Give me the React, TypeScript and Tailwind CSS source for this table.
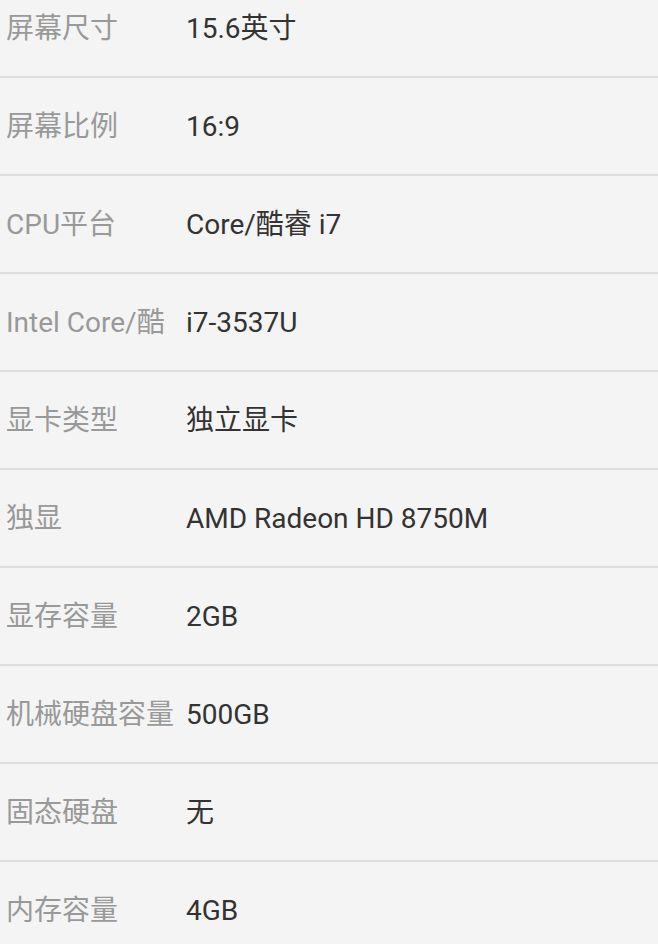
import React from "react";

const rows: [string, string][] = [
  ["屏幕尺寸", "15.6英寸"],
  ["屏幕比例", "16:9"],
  ["CPU平台", "Core/酷睿 i7"],
  ["Intel Core/酷", "i7-3537U"],
  ["显卡类型", "独立显卡"],
  ["独显", "AMD Radeon HD 8750M"],
  ["显存容量", "2GB"],
  ["机械硬盘容量", "500GB"],
  ["固态硬盘", "无"],
  ["内存容量", "4GB"],
];

export default function App() {
  return (
    <div
      className="w-[658px] h-[944px] overflow-hidden bg-[#f4f4f4]"
      style={{ fontFamily: 'Roboto, "Noto Sans CJK SC", sans-serif' }}
    >
      {rows.map(([k, v], i) => (
        <div
          key={i}
          className={`flex items-center text-[28px] leading-[40px] ${
            i === 0 ? "pt-[9px] pb-[27px]" : "pt-[29px] pb-[27px]"
          } ${i < rows.length - 1 ? "border-b-2 border-[#dddddd]" : ""}`}
        >
          <div className="w-[186px] shrink-0 pl-[6px] text-[#999999] whitespace-nowrap overflow-hidden">
            {k}
          </div>
          <div className="text-[#333333] whitespace-nowrap">{v}</div>
        </div>
      ))}
    </div>
  );
}
